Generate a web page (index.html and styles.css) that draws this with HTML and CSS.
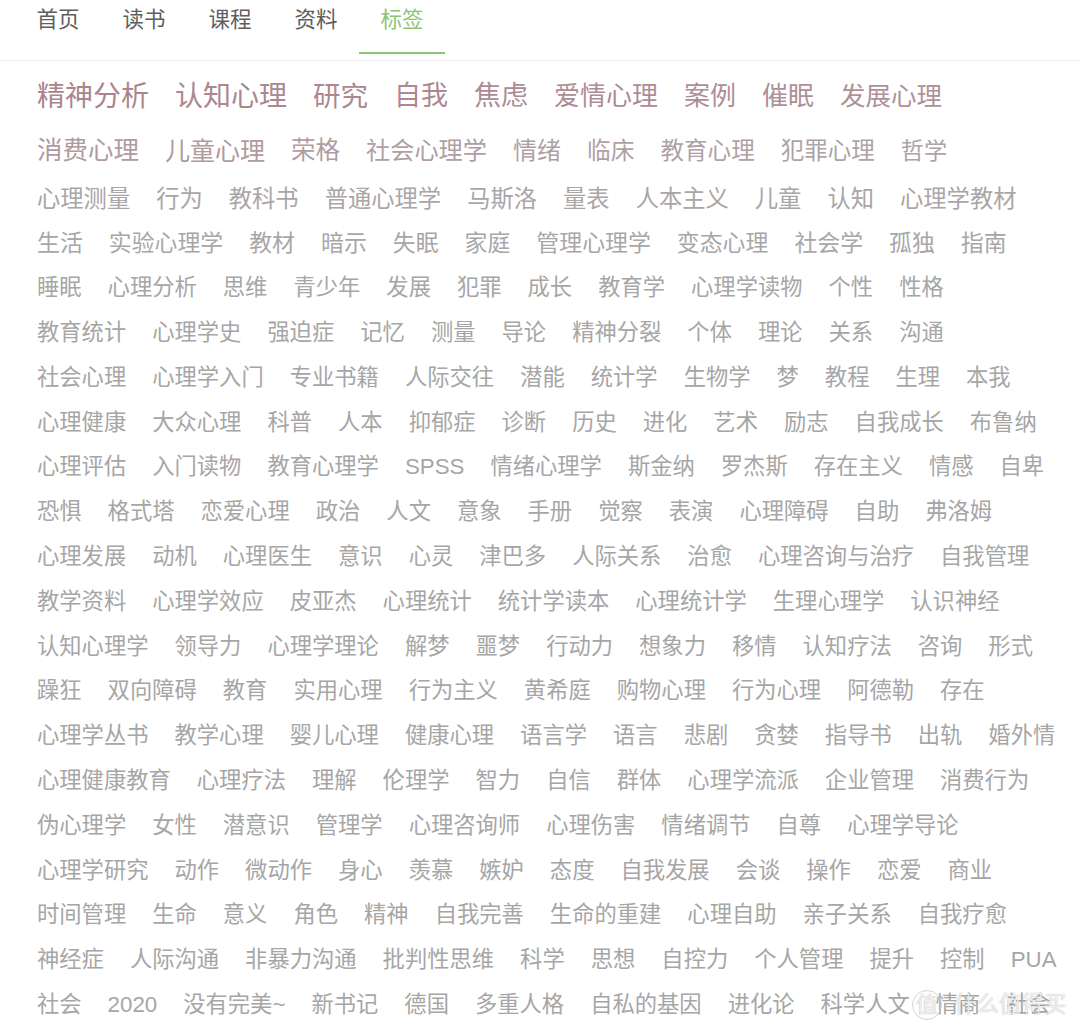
FILE: index.html
```html
<!DOCTYPE html>
<html lang="zh-CN">
<head>
<meta charset="utf-8">
<title>标签</title>
<link rel="stylesheet" href="styles.css">
</head>
<body>
<nav class="nav">
  <a class="tab">首页</a>
  <a class="tab">读书</a>
  <a class="tab">课程</a>
  <a class="tab">资料</a>
  <a class="tab active">标签</a>
</nav>
<main class="tags">
  <div class="row r1">
    <a class="tag" style="font-size:28px;color:#ab858e">精神分析</a>
    <a class="tag" style="font-size:28px;color:#ab8790">认知心理</a>
    <a class="tag" style="font-size:27.5px;color:#ac8891">研究</a>
    <a class="tag" style="font-size:27px;color:#ac8992">自我</a>
    <a class="tag" style="font-size:27px;color:#ad8b93">焦虑</a>
    <a class="tag" style="font-size:26px;color:#ad8c94">爱情心理</a>
    <a class="tag" style="font-size:26px;color:#ad8e96">案例</a>
    <a class="tag" style="font-size:26px;color:#ae9097">催眠</a>
    <a class="tag" style="font-size:25.5px;color:#ae9198">发展心理</a>
  </div>
  <div class="row r2">
    <a class="tag" style="font-size:25.5px;color:#b0999f">消费心理</a>
    <a class="tag" style="font-size:25px;color:#b09aa0">儿童心理</a>
    <a class="tag" style="font-size:24.5px;color:#b09ca1">荣格</a>
    <a class="tag" style="font-size:24.2px;color:#af9ea3">社会心理学</a>
    <a class="tag" style="font-size:24px;color:#af9fa4">情绪</a>
    <a class="tag" style="font-size:23.7px;color:#aea1a5">临床</a>
    <a class="tag" style="font-size:23.6px;color:#aea2a5">教育心理</a>
    <a class="tag" style="font-size:23.5px;color:#ada3a6">犯罪心理</a>
    <a class="tag" style="font-size:23.2px;color:#aca4a6">哲学</a>
  </div>
  <div class="row r3">
    <a class="tag">心理测量</a><a class="tag">行为</a><a class="tag">教科书</a><a class="tag">普通心理学</a><a class="tag">马斯洛</a><a class="tag">量表</a><a class="tag">人本主义</a><a class="tag">儿童</a><a class="tag">认知</a><a class="tag">心理学教材</a>
  </div>
  <div class="row r4">
    <a class="tag">生活</a><a class="tag">实验心理学</a><a class="tag">教材</a><a class="tag">暗示</a><a class="tag">失眠</a><a class="tag">家庭</a><a class="tag">管理心理学</a><a class="tag">变态心理</a><a class="tag">社会学</a><a class="tag">孤独</a><a class="tag">指南</a>
  </div>
  <div class="row">
    <a class="tag">睡眠</a><a class="tag">心理分析</a><a class="tag">思维</a><a class="tag">青少年</a><a class="tag">发展</a><a class="tag">犯罪</a><a class="tag">成长</a><a class="tag">教育学</a><a class="tag">心理学读物</a><a class="tag">个性</a><a class="tag">性格</a>
  </div>
  <div class="row">
    <a class="tag">教育统计</a><a class="tag">心理学史</a><a class="tag">强迫症</a><a class="tag">记忆</a><a class="tag">测量</a><a class="tag">导论</a><a class="tag">精神分裂</a><a class="tag">个体</a><a class="tag">理论</a><a class="tag">关系</a><a class="tag">沟通</a>
  </div>
  <div class="row">
    <a class="tag">社会心理</a><a class="tag">心理学入门</a><a class="tag">专业书籍</a><a class="tag">人际交往</a><a class="tag">潜能</a><a class="tag">统计学</a><a class="tag">生物学</a><a class="tag">梦</a><a class="tag">教程</a><a class="tag">生理</a><a class="tag">本我</a>
  </div>
  <div class="row">
    <a class="tag">心理健康</a><a class="tag">大众心理</a><a class="tag">科普</a><a class="tag">人本</a><a class="tag">抑郁症</a><a class="tag">诊断</a><a class="tag">历史</a><a class="tag">进化</a><a class="tag">艺术</a><a class="tag">励志</a><a class="tag">自我成长</a><a class="tag">布鲁纳</a>
  </div>
  <div class="row">
    <a class="tag">心理评估</a><a class="tag">入门读物</a><a class="tag">教育心理学</a><a class="tag">SPSS</a><a class="tag">情绪心理学</a><a class="tag">斯金纳</a><a class="tag">罗杰斯</a><a class="tag">存在主义</a><a class="tag">情感</a><a class="tag">自卑</a>
  </div>
  <div class="row">
    <a class="tag">恐惧</a><a class="tag">格式塔</a><a class="tag">恋爱心理</a><a class="tag">政治</a><a class="tag">人文</a><a class="tag">意象</a><a class="tag">手册</a><a class="tag">觉察</a><a class="tag">表演</a><a class="tag">心理障碍</a><a class="tag">自助</a><a class="tag">弗洛姆</a>
  </div>
  <div class="row">
    <a class="tag">心理发展</a><a class="tag">动机</a><a class="tag">心理医生</a><a class="tag">意识</a><a class="tag">心灵</a><a class="tag">津巴多</a><a class="tag">人际关系</a><a class="tag">治愈</a><a class="tag">心理咨询与治疗</a><a class="tag">自我管理</a>
  </div>
  <div class="row">
    <a class="tag">教学资料</a><a class="tag">心理学效应</a><a class="tag">皮亚杰</a><a class="tag">心理统计</a><a class="tag">统计学读本</a><a class="tag">心理统计学</a><a class="tag">生理心理学</a><a class="tag">认识神经</a>
  </div>
  <div class="row">
    <a class="tag">认知心理学</a><a class="tag">领导力</a><a class="tag">心理学理论</a><a class="tag">解梦</a><a class="tag">噩梦</a><a class="tag">行动力</a><a class="tag">想象力</a><a class="tag">移情</a><a class="tag">认知疗法</a><a class="tag">咨询</a><a class="tag">形式</a>
  </div>
  <div class="row">
    <a class="tag">躁狂</a><a class="tag">双向障碍</a><a class="tag">教育</a><a class="tag">实用心理</a><a class="tag">行为主义</a><a class="tag">黄希庭</a><a class="tag">购物心理</a><a class="tag">行为心理</a><a class="tag">阿德勒</a><a class="tag">存在</a>
  </div>
  <div class="row">
    <a class="tag">心理学丛书</a><a class="tag">教学心理</a><a class="tag">婴儿心理</a><a class="tag">健康心理</a><a class="tag">语言学</a><a class="tag">语言</a><a class="tag">悲剧</a><a class="tag">贪婪</a><a class="tag">指导书</a><a class="tag">出轨</a><a class="tag">婚外情</a>
  </div>
  <div class="row">
    <a class="tag">心理健康教育</a><a class="tag">心理疗法</a><a class="tag">理解</a><a class="tag">伦理学</a><a class="tag">智力</a><a class="tag">自信</a><a class="tag">群体</a><a class="tag">心理学流派</a><a class="tag">企业管理</a><a class="tag">消费行为</a>
  </div>
  <div class="row">
    <a class="tag">伪心理学</a><a class="tag">女性</a><a class="tag">潜意识</a><a class="tag">管理学</a><a class="tag">心理咨询师</a><a class="tag">心理伤害</a><a class="tag">情绪调节</a><a class="tag">自尊</a><a class="tag">心理学导论</a>
  </div>
  <div class="row">
    <a class="tag">心理学研究</a><a class="tag">动作</a><a class="tag">微动作</a><a class="tag">身心</a><a class="tag">羡慕</a><a class="tag">嫉妒</a><a class="tag">态度</a><a class="tag">自我发展</a><a class="tag">会谈</a><a class="tag">操作</a><a class="tag">恋爱</a><a class="tag">商业</a>
  </div>
  <div class="row">
    <a class="tag">时间管理</a><a class="tag">生命</a><a class="tag">意义</a><a class="tag">角色</a><a class="tag">精神</a><a class="tag">自我完善</a><a class="tag">生命的重建</a><a class="tag">心理自助</a><a class="tag">亲子关系</a><a class="tag">自我疗愈</a>
  </div>
  <div class="row">
    <a class="tag">神经症</a><a class="tag">人际沟通</a><a class="tag">非暴力沟通</a><a class="tag">批判性思维</a><a class="tag">科学</a><a class="tag">思想</a><a class="tag">自控力</a><a class="tag">个人管理</a><a class="tag">提升</a><a class="tag">控制</a><a class="tag">PUA</a>
  </div>
  <div class="row">
    <a class="tag">社会</a><a class="tag">2020</a><a class="tag">没有完美~</a><a class="tag">新书记</a><a class="tag">德国</a><a class="tag">多重人格</a><a class="tag">自私的基因</a><a class="tag">进化论</a><a class="tag">科学人文</a><a class="tag">情商</a><a class="tag">社会</a>
  </div>
</main>
<div class="watermark"><span class="wm-logo">值</span><span class="wm-text">什么值得买</span></div>
</body>
</html>
```

FILE: styles.css
```css
html, body {
  margin: 0;
  padding: 0;
  background: #ffffff;
}
body {
  position: relative;
  width: 1080px;
  height: 1034px;
  overflow: hidden;
  font-family: "Liberation Sans", "Noto Sans CJK SC", sans-serif;
}
.nav {
  display: flex;
  height: 60px;
  padding-left: 15px;
  border-bottom: 1px solid #ececec;
}
.tab {
  width: 86px;
  height: 52px;
  line-height: 40px;
  text-align: center;
  font-size: 21.5px;
  color: #5e5e5e;
  border-bottom: 2px solid transparent;
}
.tab.active {
  color: #8dc572;
  border-bottom-color: #8dc572;
}
.tags {
  padding: 7.5px 0 0 37px;
}
.row {
  display: flex;
  align-items: center;
  column-gap: 26px;
  height: 44.8px;
  white-space: nowrap;
}
.row.r1 { height: 57px; }
.row.r2 { height: 51px; }
.row.r3 { height: 45px; }
.tag {
  display: block;
  line-height: 1.3;
  font-size: 22.3px;
  color: #a6a6a6;
}
.r3 .tag { font-size: 23.3px; color: #aaa5a7; }
.r4 .tag { font-size: 22.9px; color: #a8a6a7; }
.watermark {
  position: absolute;
  left: 912px;
  top: 988px;
  display: flex;
  align-items: center;
  gap: 12px;
  color: rgba(255, 255, 255, 0.8);
  text-shadow: 0 0 1px rgba(90, 90, 90, 0.55);
}
.wm-logo {
  width: 28px;
  height: 28px;
  border-radius: 50%;
  border: 1.5px solid rgba(200, 200, 200, 0.8);
  font-size: 22px;
  line-height: 28px;
  text-align: center;
}
.wm-text {
  font-size: 22.5px;
  line-height: 34px;
}
```
